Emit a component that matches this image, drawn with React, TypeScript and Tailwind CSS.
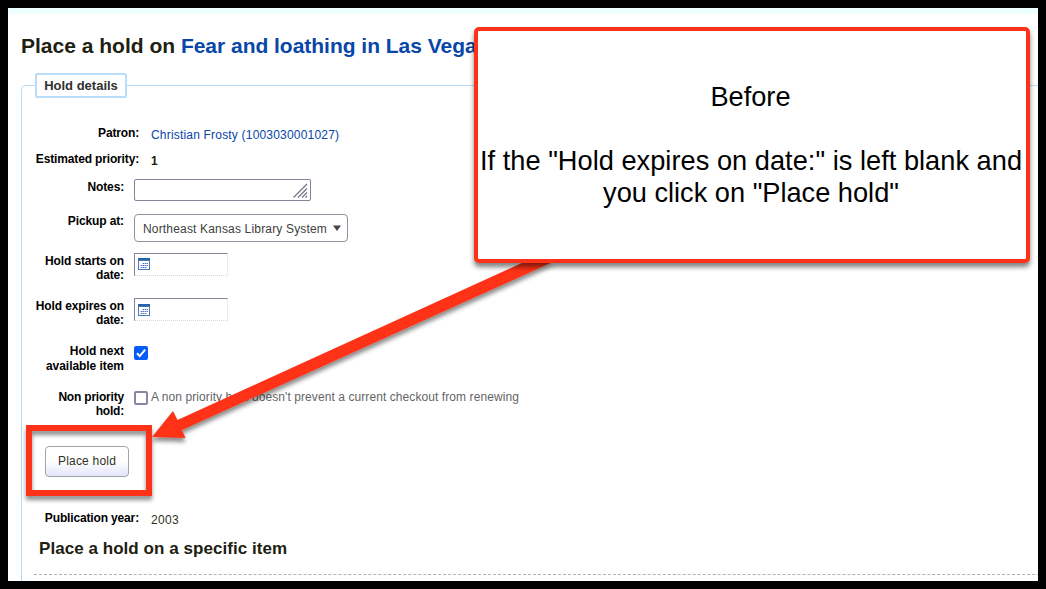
import type { ReactNode } from "react";

const label = "shrink-0 text-right font-bold text-[12px] leading-[14px] text-black";

function Row({ height, wide, name, tracking, children }: { height: string; wide?: boolean; name: ReactNode; tracking: string; children: ReactNode }) {
  return (
    <div className={`flex items-start ${height}`}>
      <div className={`${label} ${wide ? "w-[117px] mr-3" : "w-[102px] mr-[10px]"} mt-[7px] whitespace-nowrap ${tracking}`}>{name}</div>
      {children}
    </div>
  );
}

function CalendarIcon() {
  return (
    <svg width="12" height="12" viewBox="0 0 12 12" shapeRendering="crispEdges">
      <rect width="12" height="12" fill="#4a7ab5" />
      <rect x="1" y="3" width="10" height="8" fill="#fff" />
      <rect width="12" height="2" fill="#2862ab" />
      <path d="M2 7h8v1h-8zM2 9h7v1h-7zM4 5h6v1h-6z" fill="#b8c6ee" />
      <path d="M5 5h1v1h-1zM7 5h1v1h-1zM9 5h1v1h-1zM3 7h1v1h-1zM5 7h1v1h-1zM7 7h1v1h-1zM9 7h1v1h-1zM3 9h1v1h-1zM5 9h1v1h-1zM7 9h1v1h-1z" fill="#4b6cc1" />
    </svg>
  );
}

function DateField({ iconTop }: { iconTop: string }) {
  return (
    <div className={`mt-[6px] flex h-[23px] w-[94px] items-start border border-t-[#85829b] border-l-[#85829b] border-r-[#d4d4e6] border-b-[#d4d4e6] bg-white pl-[3px] [border-bottom-style:dotted] [border-right-style:dotted] ${iconTop}`}>
      <CalendarIcon />
    </div>
  );
}

export default function App() {
  return (
    <div className="relative h-[589px] w-[1046px] overflow-hidden border-8 border-black bg-white font-['Liberation_Sans',Arial,sans-serif] text-[12px]">
      <div className="h-[6px] bg-[#edffff]" />
      <h1 className="ml-[13px] mt-[20px] h-[24px] whitespace-nowrap text-[21px] font-bold leading-[24px] text-[#202010]">
        Place a hold on <span className="tracking-[-0.02px] text-[#0846a7]">Fear and loathing in Las Vegas</span>
      </h1>

      <div className="ml-[13px] mt-[27px] flex h-[520px] w-[1030px] flex-col rounded-[4px] border border-[#b4dcfa]">
        <div className="-mt-[13px] ml-[13px] h-[25px] w-[92px] shrink-0 rounded-[2px] border-2 border-[#b9dcf8] bg-white text-center text-[13px] font-bold leading-[21px] text-[#303030]">
          Hold details
        </div>

        <div className="pt-[21px]">
          <Row height="h-[26px]" wide name="Patron:" tracking="tracking-[-0.15px]">
            <a className="mt-[9px] leading-[14px] tracking-[0.19px] text-[#0846a7]">Christian Frosty (1003030001027)</a>
          </Row>
          <Row height="h-[28px]" wide name="Estimated priority:" tracking="tracking-[-0.15px]">
            <span className="mt-[9px] font-bold leading-[14px] text-[#202010]">1</span>
          </Row>
          <Row height="h-[34px]" name="Notes:" tracking="tracking-[-0.15px]">
            <div className="mt-[6px] flex h-[22px] w-[177px] items-end justify-end rounded-[2px] border border-[#85829b] bg-white pr-[2px] pb-[2px]">
              <svg width="15" height="15" viewBox="0 0 15 15" fill="none" stroke="#77758a" strokeWidth="1.3">
                <path d="M0.5 14.5L14 1M5 14.5L14 5.5M9 14.5L14 9.5M12.5 14.5L14 13" />
              </svg>
            </div>
          </Row>
          <Row height="h-[40px]" name="Pickup at:" tracking="tracking-[-0.12px]">
            <div className="mt-[7px] flex h-[28px] w-[214px] items-center rounded-[4px] border border-[#92909c] bg-white pl-2 text-[#404040]">
              <span className="mt-[2px] whitespace-nowrap tracking-[0.17px]">Northeast Kansas Library System</span>
              <svg className="ml-[6px]" width="8" height="6" viewBox="0 0 8 6"><path d="M0 .5h8L4 6z" fill="#44454c" /></svg>
            </div>
          </Row>
          <Row height="h-[45px]" name={<>Hold starts on<br />date:</>} tracking="tracking-[-0.12px]">
            <DateField iconTop="pt-[4px]" />
          </Row>
          <Row height="h-[45px]" name={<>Hold expires on<br />date:</>} tracking="tracking-[-0.12px]">
            <DateField iconTop="pt-[5px]" />
          </Row>
          <Row height="h-[46px]" name={<>Hold next<br /><span className="relative top-px">available item</span></>} tracking="tracking-[-0.05px]">
            <svg className="mt-[9px]" width="14" height="14" viewBox="0 0 14 14">
              <rect width="14" height="14" rx="2" fill="#075cf8" />
              <path d="M3 7.2l2.7 2.9L11.2 3.6" fill="none" stroke="#fff" strokeWidth="2" />
            </svg>
          </Row>
          <Row height="h-[63px]" name={<>Non priority<br />hold:</>} tracking="tracking-[-0.2px]">
            <span className="mt-[8px] h-[14px] w-[14px] rounded-[2px] border-2 border-[#8886a0] bg-white" />
            <span className="ml-[3px] mt-[7px] whitespace-nowrap leading-[14px] tracking-[0.08px] text-[#656565]">A non priority hold doesn't prevent a current checkout from renewing</span>
          </Row>
          <button className="ml-[23px] block h-[31px] w-[84px] rounded-[4px] border border-[#a5a3aa] bg-linear-to-b from-white from-50% to-[#e4e4fb] pb-[2px] text-[12px] leading-[14px] tracking-[0.2px] text-[#303020]">
            Place hold
          </button>
          <div className="mt-[27px]">
            <Row height="h-[35px]" wide name="Publication year:" tracking="tracking-[-0.15px]">
              <span className="mt-[9px] leading-[14px] tracking-[0.3px] text-[#303020]">2003</span>
            </Row>
          </div>
          <h2 className="ml-[17px] text-[17px] font-bold leading-[20px] tracking-[0.05px] text-[#202010]">Place a hold on a specific item</h2>
          <div className="ml-[12px] mt-[15px] border-t border-dashed border-[#b5b2a6]" />
        </div>
      </div>

      <svg className="absolute -left-2 -top-2" width="1046" height="589" viewBox="0 0 1046 589">
        <defs>
          <filter id="shade" x="0" y="0" width="1046" height="589" filterUnits="userSpaceOnUse">
            <feDropShadow dx="0" dy="4" stdDeviation="2.2" floodColor="#000" floodOpacity="0.45" />
          </filter>
        </defs>
        <g filter="url(#shade)">
          <rect x="29" y="428" width="120" height="65" fill="none" stroke="#fd3219" strokeWidth="6" />
          <path d="M152 437L173 411L177.5 420L524 262L555 261L182 430L185.5 438Z" fill="#fd3219" />
        </g>
      </svg>

      <div className="absolute left-[466px] top-[19px] flex h-[236px] w-[556px] flex-col items-center whitespace-nowrap rounded-[5px] border-4 border-[#fd3219] bg-white pt-[50px] text-center text-[27.2px] leading-[32px] text-black shadow-[0_4px_5px_rgba(0,0,0,0.5)]">
        <p className="-ml-[3px]">Before</p>
        <p className="mt-[32px] -ml-[2px] tracking-[0.03px]">If the "Hold expires on date:" is left blank and</p>
        <p className="-ml-[2px]">you click on "Place hold"</p>
      </div>
    </div>
  );
}
